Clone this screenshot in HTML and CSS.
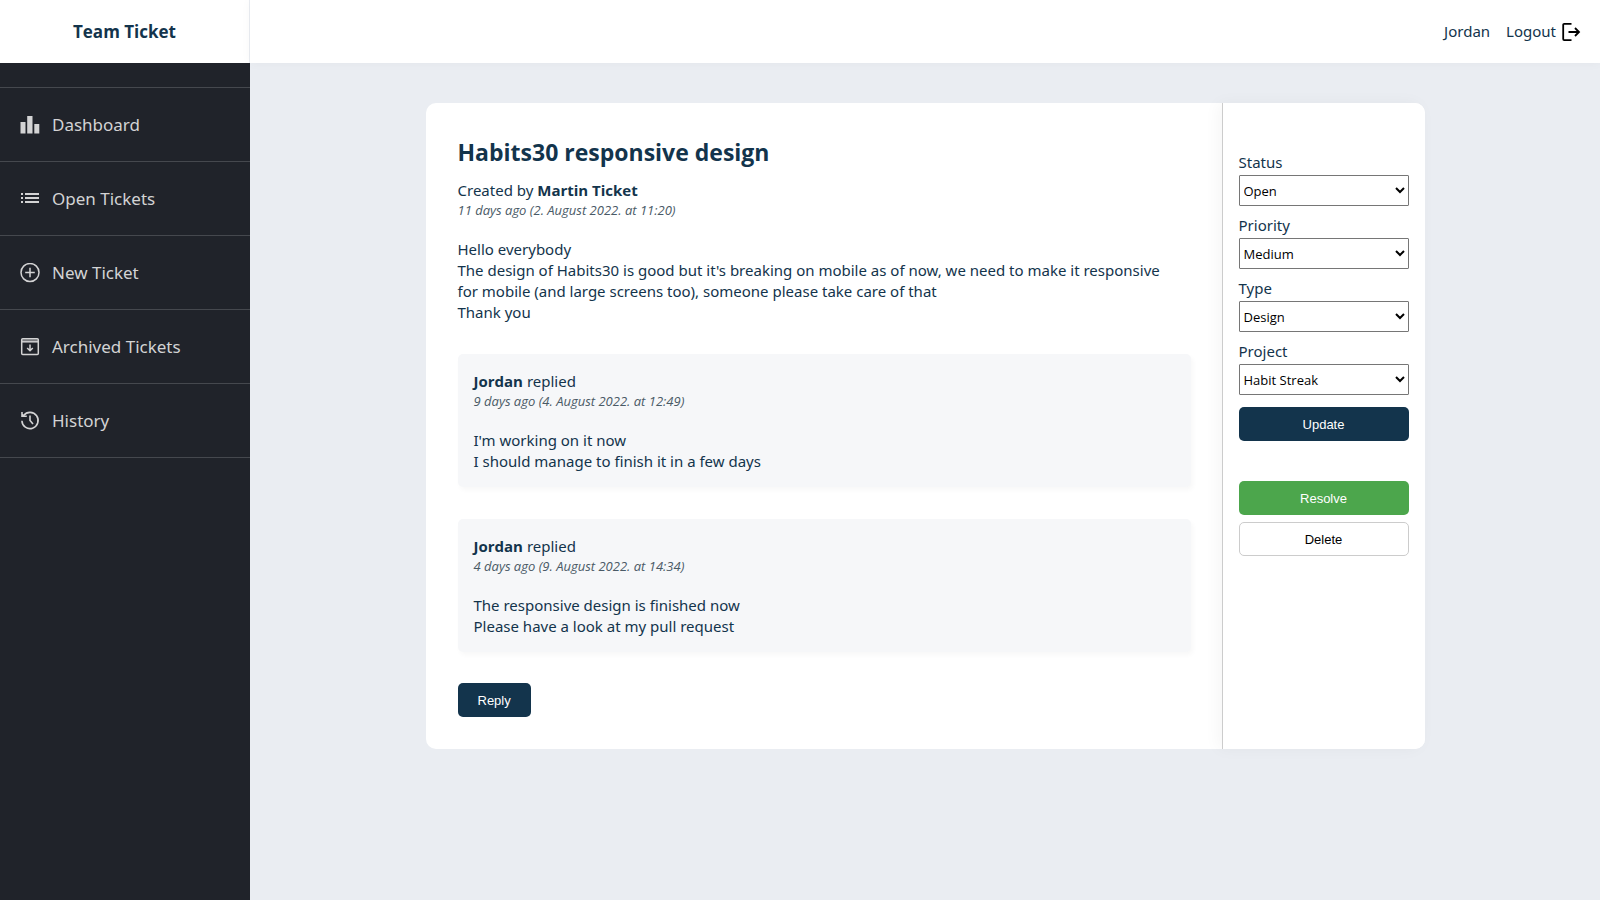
FILE: index.html
```html
<!DOCTYPE html>
<html lang="en">
<head>
<meta charset="utf-8">
<meta name="viewport" content="width=device-width, initial-scale=1">
<title>Team Ticket</title>
<link rel="stylesheet" href="styles.css">
</head>
<body>
<div class="app">
  <div class="sidebar">
    <div class="brand">Team Ticket</div>
    <nav class="nav">
      <a class="nav-link" href="#">
        <svg class="nav-icon" viewBox="0 0 20 20" fill="currentColor"><path d="M.5 7h5v11.500h-5zM7.200 1h5.300v17.500H7.200zM14.300 9h5v9.500h-5z"/></svg>
        Dashboard</a>
      <a class="nav-link" href="#">
        <svg class="nav-icon" viewBox="0 0 20 20" fill="currentColor"><path d="M1 4h2v2H1zM5 4h14v2H5zM1 8h2v2H1zM5 8h14v2H5zM1 12h2v2H1zM5 12h14v2H5z"/></svg>
        Open Tickets</a>
      <a class="nav-link" href="#">
        <svg class="nav-icon" viewBox="0 0 20 20" fill="none" stroke="currentColor" stroke-width="1.500"><circle cx="10" cy="9.500" r="9"/><path d="M10 4.700v9.600M5.200 9.500h9.600"/></svg>
        New Ticket</a>
      <a class="nav-link" href="#">
        <svg class="nav-icon" viewBox="0 0 20 20" fill="none" stroke="currentColor" stroke-width="1.500" stroke-linejoin="round"><rect x="1.700" y="1.700" width="16.600" height="15.800" rx="1"/><path d="M2 4.800h16"/><path d="M2 3.300h16" opacity=".5"/><path d="M10 7.500v6M7.200 11l2.800 2.800 2.800-2.800"/></svg>
        Archived Tickets</a>
      <a class="nav-link" href="#">
        <svg class="nav-icon" viewBox="0 0 20 20" fill="none" stroke="currentColor" stroke-width="1.600"><path d="M1.900 9.700A8.100 8.100 0 1 0 3.600 4.500"/><path d="M2 1v4.300h4.800M3.900 5.100 2 3.200"/><path d="M10 4.500v5l3 3.600"/></svg>
        History</a>
    </nav>
  </div>
  <div class="page">
    <header class="topbar">
      <a class="top-link" href="#">Jordan</a>
      <a class="top-link" href="#">Logout
        <svg class="logout-icon" viewBox="0 0 20 20" fill="none" stroke="#000" stroke-width="1.800"><path d="M9.500 1.900H2.200a1 1 0 0 0-1 1v14.200a1 1 0 0 0 1 1h7.300"/><path d="M6.500 10h10.300M13 6l4 4-4 4"/></svg>
      </a>
    </header>
    <main class="content">
      <div class="card">
        <article class="ticket">
          <h1 class="ticket-title">Habits30 responsive design</h1>
          <p class="author">Created by <strong>Martin Ticket</strong></p>
          <p class="date">11 days ago (2. August 2022. at 11:20)</p>
          <p class="message">Hello everybody<br>The design of Habits30 is good but it's breaking on mobile as of now, we need to make it responsive for mobile (and large screens too), someone please take care of that<br>Thank you</p>
          <section class="reply">
            <p class="author"><strong>Jordan</strong> replied</p>
            <p class="date">9 days ago (4. August 2022. at 12:49)</p>
            <p class="message">I'm working on it now<br>I should manage to finish it in a few days</p>
          </section>
          <section class="reply">
            <p class="author"><strong>Jordan</strong> replied</p>
            <p class="date">4 days ago (9. August 2022. at 14:34)</p>
            <p class="message">The responsive design is finished now<br>Please have a look at my pull request</p>
          </section>
          <button class="button button-reply" type="button">Reply</button>
        </article>
        <aside class="options">
          <form class="fields">
            <div class="field"><label for="status">Status</label>
              <select id="status"><option>Open</option></select></div>
            <div class="field"><label for="priority">Priority</label>
              <select id="priority"><option>Medium</option></select></div>
            <div class="field"><label for="type">Type</label>
              <select id="type"><option>Design</option></select></div>
            <div class="field"><label for="project">Project</label>
              <select id="project"><option>Habit Streak</option></select></div>
            <button class="button button-update" type="button">Update</button>
          </form>
          <div class="actions">
            <button class="button button-resolve" type="button">Resolve</button>
            <button class="button button-delete" type="button">Delete</button>
          </div>
        </aside>
      </div>
    </main>
  </div>
</div>
</body>
</html>
```
FILE: styles.css
```css
* {
  box-sizing: border-box;
}

body {
  margin: 0;
  background: #eaedf2;
  color: #13344c;
  font-family: "Noto Sans", "Open Sans", sans-serif;
  font-size: 15px;
  line-height: 21px;
}

h1,
p {
  margin: 0;
}

a {
  color: inherit;
  text-decoration: none;
}

.app {
  display: flex;
  min-height: 100vh;
}

.sidebar {
  flex: 0 0 250px;
  background: #20232a;
}

.brand {
  display: flex;
  align-items: center;
  justify-content: center;
  height: 63px;
  border-right: 1px solid #eaedf2;
  background: #fff;
  font-size: 17px;
  font-weight: 700;
}

.nav {
  margin-top: 24px;
  border-top: 1px solid #45484e;
}

.nav-link {
  display: flex;
  align-items: center;
  gap: 12px;
  height: 74px;
  padding: 0 20px;
  border-bottom: 1px solid #45484e;
  color: #d3d3d4;
  font-size: 17px;
}

.nav-icon {
  width: 20px;
  height: 20px;
}

.page {
  flex: 1;
  min-width: 0;
}

.topbar {
  display: flex;
  align-items: center;
  justify-content: flex-end;
  gap: 16px;
  height: 63px;
  padding: 0 18px;
  background: #fff;
  box-shadow: 0 0 10px rgba(0, 0, 0, 0.04);
}

.top-link {
  display: flex;
  align-items: center;
  gap: 6px;
}

.logout-icon {
  width: 20px;
  height: 20px;
}

.content {
  padding: 40px 16px;
}

.card {
  display: flex;
  max-width: 999px;
  margin: 0 auto;
  border-radius: 10px;
  background: #fff;
}

.ticket {
  flex: 1;
  min-width: 0;
  padding: 33px 31px 32px 32px;
}

.ticket-title {
  margin-bottom: 12px;
  font-family: "Open Sans", "Noto Sans", sans-serif;
  font-size: 23px;
  line-height: 32px;
}

.author strong,
.brand {
  font-family: "Open Sans", "Noto Sans", sans-serif;
}

.date {
  color: #4a5a66;
  font-family: "Open Sans", "Noto Sans", sans-serif;
  font-size: 13px;
  font-style: italic;
  line-height: 18px;
}

.message {
  margin-top: 20px;
  padding-right: 16px;
}

.reply {
  margin-top: 31px;
  padding: 17px 16px 15px;
  border-radius: 5px;
  background: #f6f7f9;
  box-shadow: 2px 3px 5px rgba(0, 0, 0, 0.03);
}

.reply + .reply {
  margin-top: 32px;
}

.options {
  flex: 0 0 203px;
  padding: 49px 16px 32px;
  border-left: 1px solid #ccc;
  border-radius: 0 10px 10px 0;
  background: #fff;
  box-shadow: -4px 0 16px rgba(0, 0, 0, 0.04);
}

.field {
  display: flex;
  flex-direction: column;
  gap: 2px;
  margin-bottom: 9px;
}

.field select {
  height: 31px;
  padding: 0;
  border: 1px solid #767676;
  border-radius: 1px;
  background: #fff;
  color: #000;
  font-family: "Open Sans", "Noto Sans", sans-serif;
  font-size: 13px;
}

.button {
  height: 34px;
  border: 0;
  border-radius: 5px;
  background: #13344c;
  color: #fff;
  font-family: "Liberation Sans", Arial, sans-serif;
  font-size: 13px;
}

.button-reply {
  display: block;
  margin-top: 31px;
  padding: 0 20px;
}

.button-update {
  width: 100%;
  margin-top: 3px;
}

.actions {
  display: flex;
  flex-direction: column;
  gap: 7px;
  margin-top: 40px;
}

.button-resolve {
  background: #4ca64c;
}

.button-delete {
  border: 1px solid #ccc;
  background: #fff;
  color: #000;
}
```
